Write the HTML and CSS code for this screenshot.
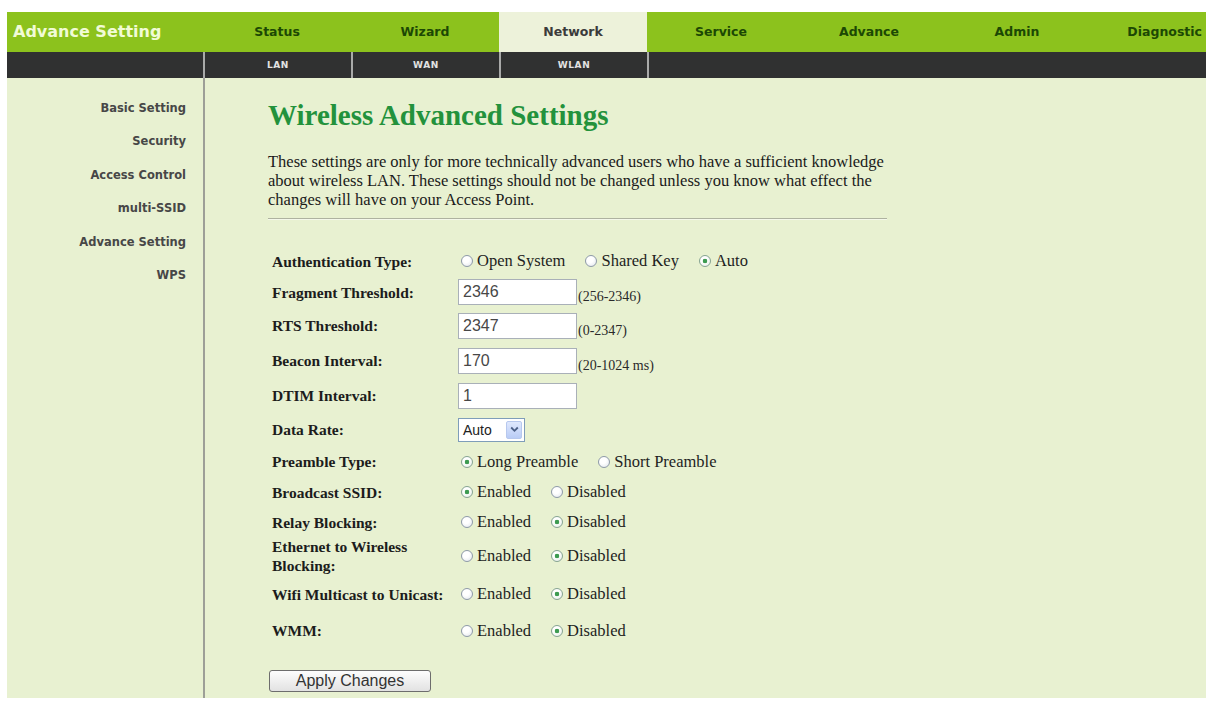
FILE: index.html
```html
<!DOCTYPE html>
<html lang="en">
<head>
<meta charset="utf-8">
<title>Wireless Advanced Settings</title>
<link rel="stylesheet" href="styles.css">
</head>
<body>
<div class="page">
  <div class="topnav">
    <div class="brand">Advance Setting</div>
    <ul class="tabs">
      <li class="tab">Status</li>
      <li class="tab">Wizard</li>
      <li class="tab active">Network</li>
      <li class="tab">Service</li>
      <li class="tab">Advance</li>
      <li class="tab">Admin</li>
      <li class="tab">Diagnostic</li>
    </ul>
  </div>
  <div class="subnav">
    <div class="sub-spacer"></div>
    <ul class="subtabs">
      <li class="subtab">LAN</li>
      <li class="subtab">WAN</li>
      <li class="subtab">WLAN</li>
      <li class="subtab-end"></li>
    </ul>
  </div>
  <div class="layout">
    <nav class="side">
      <a class="side-link">Basic Setting</a>
      <a class="side-link">Security</a>
      <a class="side-link">Access Control</a>
      <a class="side-link">multi-SSID</a>
      <a class="side-link">Advance Setting</a>
      <a class="side-link">WPS</a>
    </nav>
    <main class="main">
      <h1 class="title">Wireless Advanced Settings</h1>
      <p class="intro">These settings are only for more technically advanced users who have a sufficient knowledge<br>about wireless LAN. These settings should not be changed unless you know what effect the<br>changes will have on your Access Point.</p>
      <hr class="rule">
      <form class="form">
        <div class="row">
          <div class="lbl">Authentication Type:</div>
          <div class="ctl">
            <label class="opt"><input class="radio" type="radio" name="auth">Open System</label>
            <label class="opt"><input class="radio" type="radio" name="auth">Shared Key</label>
            <label class="opt"><input class="radio" type="radio" name="auth" checked>Auto</label>
          </div>
        </div>
        <div class="row h32">
          <div class="lbl">Fragment Threshold:</div>
          <div class="ctl"><input class="txt" type="text" value="2346"><span class="hint">(256-2346)</span></div>
        </div>
        <div class="row h35">
          <div class="lbl">RTS Threshold:</div>
          <div class="ctl"><input class="txt" type="text" value="2347"><span class="hint">(0-2347)</span></div>
        </div>
        <div class="row h35">
          <div class="lbl">Beacon Interval:</div>
          <div class="ctl"><input class="txt" type="text" value="170"><span class="hint">(20-1024 ms)</span></div>
        </div>
        <div class="row h35">
          <div class="lbl">DTIM Interval:</div>
          <div class="ctl"><input class="txt" type="text" value="1"></div>
        </div>
        <div class="row h33">
          <div class="lbl">Data Rate:</div>
          <div class="ctl">
            <div class="select"><span class="sel-val">Auto</span><span class="sel-btn"><svg width="9" height="7" viewBox="0 0 9 7"><path d="M1.2 1.5 L4.5 4.8 L7.8 1.5" fill="none" stroke="#4b5f86" stroke-width="1.8"/></svg></span></div>
          </div>
        </div>
        <div class="row h31">
          <div class="lbl">Preamble Type:</div>
          <div class="ctl">
            <label class="opt"><input class="radio" type="radio" name="pre" checked>Long Preamble</label>
            <label class="opt"><input class="radio" type="radio" name="pre">Short Preamble</label>
          </div>
        </div>
        <div class="row">
          <div class="lbl">Broadcast SSID:</div>
          <div class="ctl">
            <label class="opt"><input class="radio" type="radio" name="bc" checked>Enabled</label>
            <label class="opt"><input class="radio" type="radio" name="bc">Disabled</label>
          </div>
        </div>
        <div class="row">
          <div class="lbl">Relay Blocking:</div>
          <div class="ctl">
            <label class="opt"><input class="radio" type="radio" name="rb">Enabled</label>
            <label class="opt"><input class="radio" type="radio" name="rb" checked>Disabled</label>
          </div>
        </div>
        <div class="row h38">
          <div class="lbl">Ethernet to Wireless<br>Blocking:</div>
          <div class="ctl">
            <label class="opt"><input class="radio" type="radio" name="eb">Enabled</label>
            <label class="opt"><input class="radio" type="radio" name="eb" checked>Disabled</label>
          </div>
        </div>
        <div class="row h38">
          <div class="lbl">Wifi Multicast to Unicast:</div>
          <div class="ctl">
            <label class="opt"><input class="radio" type="radio" name="mc">Enabled</label>
            <label class="opt"><input class="radio" type="radio" name="mc" checked>Disabled</label>
          </div>
        </div>
        <div class="row h35">
          <div class="lbl">WMM:</div>
          <div class="ctl">
            <label class="opt"><input class="radio" type="radio" name="wmm">Enabled</label>
            <label class="opt"><input class="radio" type="radio" name="wmm" checked>Disabled</label>
          </div>
        </div>
      </form>
      <button class="apply" type="button">Apply Changes</button>
    </main>
  </div>
</div>
</body>
</html>
```

FILE: styles.css
```css
* { box-sizing: border-box; }

body {
  margin: 0;
  background: #ffffff;
  font-family: "Liberation Serif", "Times New Roman", serif;
}

.page {
  margin: 12px 6px 0 7px;
  width: 1199px;
}

/* ---------- top navigation ---------- */
.topnav {
  display: flex;
  height: 40px;
  background: #8cc21d;
  overflow: hidden;
}

.brand {
  flex: 0 0 196px;
  padding-left: 6px;
  font-family: "DejaVu Sans", sans-serif;
  font-weight: bold;
  font-size: 16px;
  line-height: 40px;
  color: #f1fbd6;
  white-space: nowrap;
}

.tabs {
  display: flex;
  margin: 0;
  padding: 0;
  list-style: none;
}

.tab {
  flex: 0 0 148px;
  text-align: center;
  font-family: "DejaVu Sans", sans-serif;
  font-weight: bold;
  font-size: 12.5px;
  line-height: 40px;
  color: #1c4804;
  white-space: nowrap;
}

.tab:last-child {
  text-align: right;
  padding-right: 37px;
}

.tab.active {
  background: #edf2da;
  color: #3b3b3b;
}

/* ---------- sub navigation ---------- */
.subnav {
  display: flex;
  height: 26px;
  background: #303131;
}

.sub-spacer { flex: 0 0 196px; }

.subtabs {
  display: flex;
  margin: 0;
  padding: 0;
  list-style: none;
}

.subtab {
  flex: 0 0 148px;
  border-left: 2px solid #a9aaa9;
  text-align: center;
  font-family: "DejaVu Sans", sans-serif;
  font-weight: bold;
  font-size: 9px;
  letter-spacing: 0.6px;
  line-height: 26px;
  color: #e2e2e2;
}

.subtab-end {
  flex: 0 0 2px;
  background: #a9aaa9;
}

/* ---------- body ---------- */
.layout {
  display: flex;
  height: 620px;
  background: #e8f1d1;
}

.side {
  flex: 0 0 198px;
  padding: 14px 17px 0 0;
  border-right: 2px solid #9d9f97;
  text-align: right;
}

.side-link {
  display: block;
  height: 33.4px;
  line-height: 33.4px;
  font-family: "DejaVu Sans", sans-serif;
  font-weight: bold;
  font-size: 11.5px;
  color: #474747;
  text-decoration: none;
  white-space: nowrap;
}

.main {
  flex: 1;
  padding: 21px 0 0 63px;
}

.title {
  margin: 0;
  font-family: "Liberation Serif", serif;
  font-weight: bold;
  font-size: 29px;
  line-height: 32px;
  color: #23923c;
}

.intro {
  margin: 21px 0 0;
  font-size: 16.5px;
  line-height: 19px;
  color: #1a1a1a;
  white-space: nowrap;
}

.rule {
  width: 619px;
  height: 0;
  margin: 9px 0 0;
  border: 0;
  border-top: 1px solid #aeb2a0;
  border-bottom: 1px solid #f4f8ea;
}

/* ---------- form ---------- */
.form { margin: 26px 0 0 4px; }

.row {
  display: flex;
  align-items: center;
  height: 30px;
}
.row.h31 { height: 31px; }
.row.h32 { height: 32px; }
.row.h33 { height: 33px; }
.row.h35 { height: 35px; }
.row.h38 { height: 38px; }

.lbl {
  flex: 0 0 186px;
  font-weight: bold;
  font-size: 15.5px;
  line-height: 19px;
  color: #1c1c1c;
}

.ctl {
  display: flex;
  align-items: center;
}

.opt {
  display: inline-flex;
  align-items: center;
  margin-right: 17px;
  font-size: 16.5px;
  color: #1e1e1e;
  white-space: nowrap;
}

.radio {
  appearance: none;
  -webkit-appearance: none;
  width: 12px;
  height: 12px;
  margin: 0 4px 0 3px;
  border: 1px solid #8e9aa8;
  border-radius: 50%;
  background: radial-gradient(circle at 40% 35%, #ffffff 0, #ffffff 35%, #dfe4ea 100%);
}

.radio:checked {
  border-color: #86a392;
  background:
    radial-gradient(circle, #3d9b51 0, #3d9b51 2px, transparent 2.6px),
    radial-gradient(circle at 40% 35%, #ffffff 0, #ffffff 35%, #dfe9e0 100%);
}

.txt {
  width: 119px;
  height: 26px;
  padding: 0 4px;
  border: 1px solid #a9b0b8;
  background: #ffffff;
  font-family: "Liberation Sans", Arial, sans-serif;
  font-size: 16px;
  color: #474747;
}

.hint {
  margin: 10px 0 0 1px;
  font-size: 14px;
  color: #2a2a2a;
}

.select {
  display: flex;
  align-items: stretch;
  width: 67px;
  height: 24px;
  padding: 2px;
  border: 1px solid #7f9db9;
  background: #ffffff;
}

.sel-val {
  flex: 1;
  padding-left: 2px;
  font-family: "Liberation Sans", Arial, sans-serif;
  font-size: 14px;
  line-height: 18px;
  color: #222222;
}

.sel-btn {
  display: flex;
  align-items: center;
  justify-content: center;
  width: 16px;
  border: 1px solid #b7c8ee;
  border-radius: 2px;
  background: linear-gradient(#dfe8fd, #b9ccf6);
}

.apply {
  display: block;
  width: 162px;
  height: 22px;
  margin: 22px 0 0 1px;
  padding: 0;
  border: 1px solid #6d6d6d;
  border-radius: 3px;
  background: linear-gradient(#fdfdfd, #e2e2e2);
  font-family: "Liberation Sans", Arial, sans-serif;
  font-size: 16px;
  color: #333333;
}
```
